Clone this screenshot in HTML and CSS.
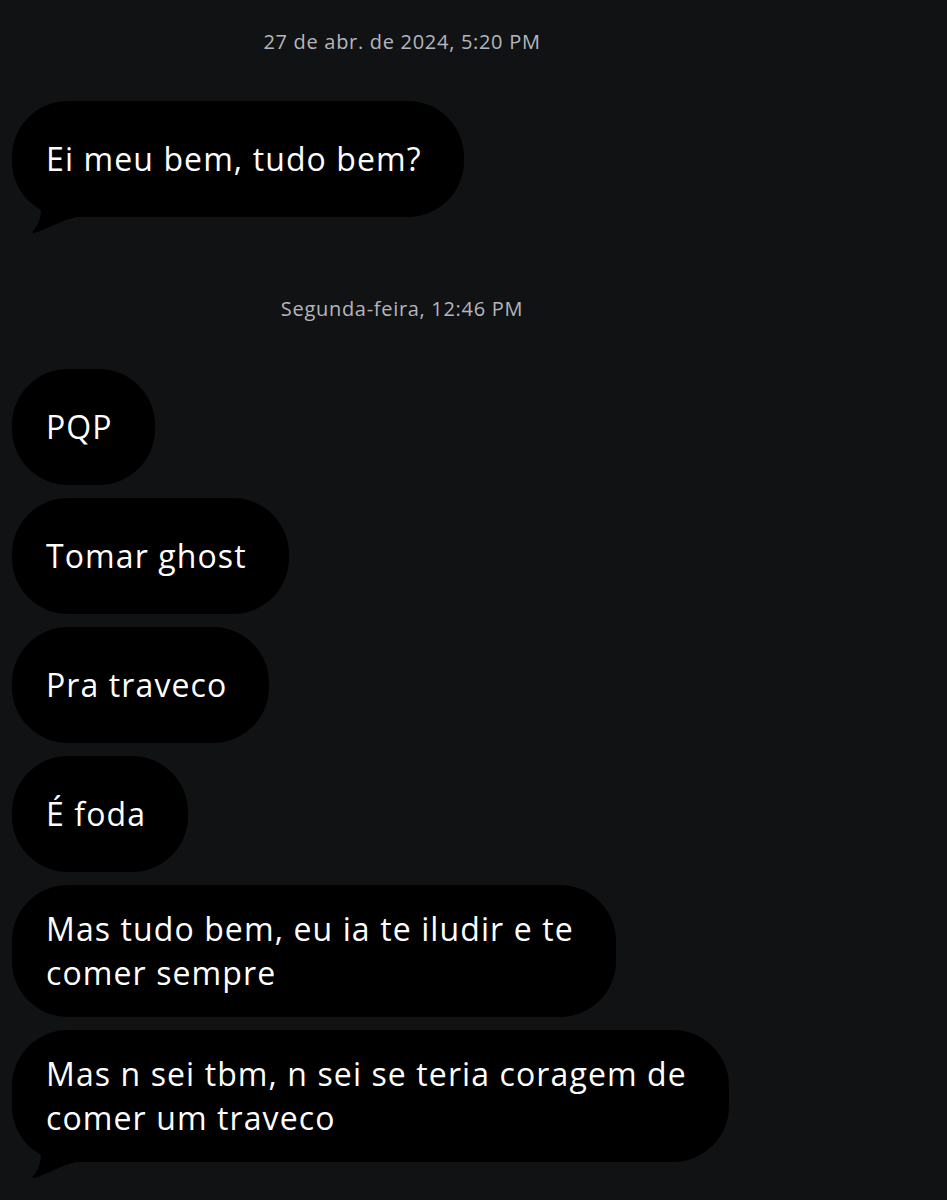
FILE: index.html
```html
<!DOCTYPE html>
<html lang="pt-BR">
<head>
  <meta charset="UTF-8" />
  <meta name="viewport" content="width=device-width, initial-scale=1.0"/>
  <title>Conversa</title>
  <link rel="stylesheet" href="styles.css">
</head>
<body>

<main class="chat">
  <p class="stamp">27 de abr. de 2024, 5:20 PM</p>

  <div class="group first">
    <div class="bubble last">
      Ei meu bem, tudo bem?
      <svg class="tail" viewBox="0 0 64 38" width="64" height="38"><path d="M26 0 L29 15 C28 24 25 30 21 34 C20 35.5 21 36.5 23 35.8 C35 32 48 24 64 20 L64 0 Z"/></svg>
    </div>
  </div>

  <p class="stamp">Segunda-feira, 12:46 PM</p>

  <div class="group">
    <div class="bubble">PQP</div>
    <div class="bubble">Tomar ghost</div>
    <div class="bubble">Pra traveco</div>
    <div class="bubble">É foda</div>
    <div class="bubble">Mas tudo bem, eu ia te iludir e te<br>comer sempre</div>
    <div class="bubble last">
      Mas n sei tbm, n sei se teria coragem de<br>comer um traveco
      <svg class="tail" viewBox="0 0 64 38" width="64" height="38"><path d="M26 0 L29 15 C28 24 25 30 21 34 C20 35.5 21 36.5 23 35.8 C35 32 48 24 64 20 L64 0 Z"/></svg>
    </div>
  </div>
</main>

</body>
</html>
```

FILE: styles.css
```css
body {
  margin: 0;
  background-color: #111214;
  color: #ffffff;
  font-family: "Open Sans", Lato, sans-serif;
}
.chat {
  padding: 30px 0 40px 12px;
}
.stamp {
  width: 780px;
  margin: 0;
  text-align: center;
  font-size: 20px;
  line-height: 24px;
  letter-spacing: 0.7px;
  color: #b4b6bd;
}
.group {
  display: flex;
  flex-direction: column;
  align-items: flex-start;
  gap: 13px;
  margin: 48px 0 0 0;
}
.group.first {
  margin-bottom: 80px;
  margin-top: 47px;
}
.bubble {
  position: relative;
  box-sizing: border-box;
  min-height: 116px;
  display: flex;
  align-items: center;
  padding: 22px 42px 22px 34px;
  background-color: #000000;
  border-radius: 56px;
  font-size: 32px;
  line-height: 44px;
  letter-spacing: 1.1px;
}
.tail {
  position: absolute;
  left: 0;
  bottom: -18px;
  fill: #000000;
}
```
